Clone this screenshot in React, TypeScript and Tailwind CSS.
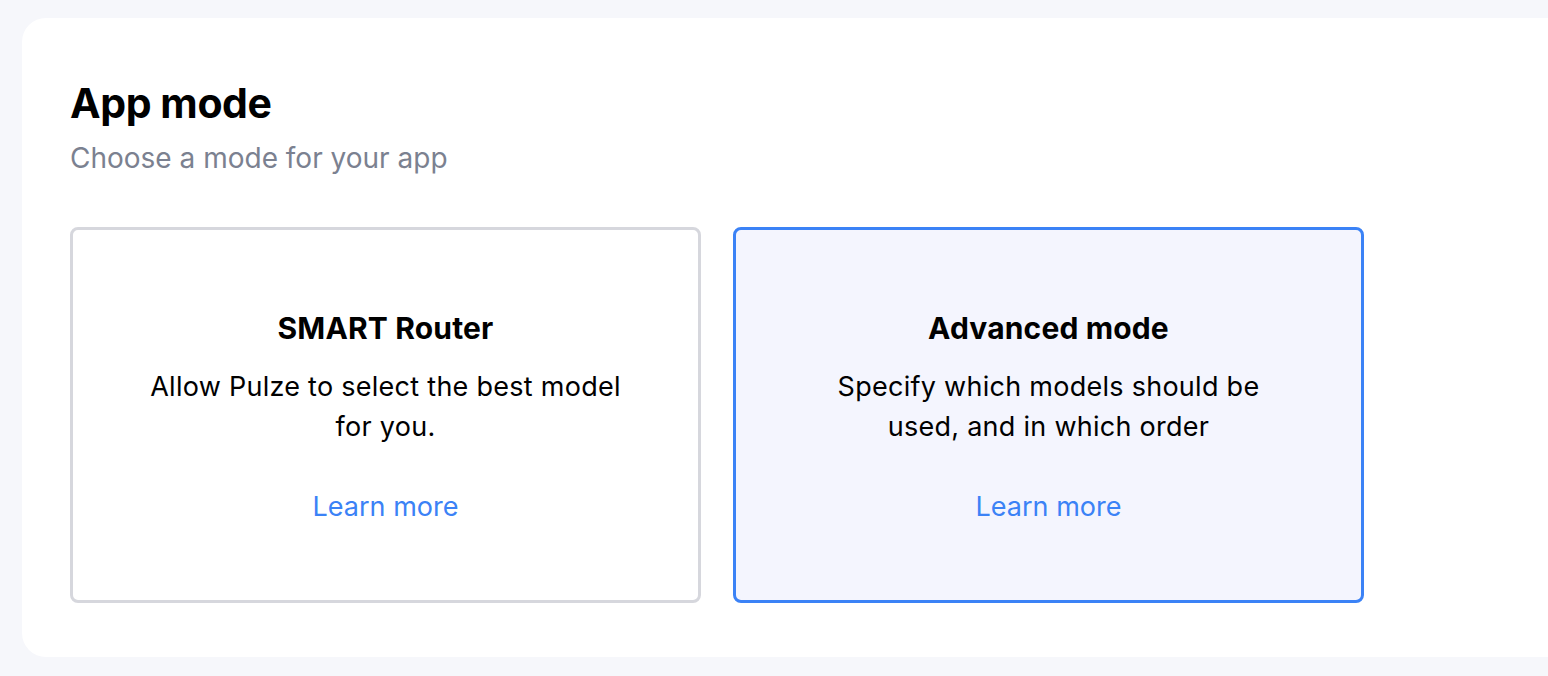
import React from 'react';

interface ModeCardProps {
  title: string;
  description: React.ReactNode;
  selected?: boolean;
}

const ModeCard: React.FC<ModeCardProps> = ({ title, description, selected }) => (
  <button
    className={`w-[631px] h-[376px] pt-[5px] rounded-lg border-[3px] flex flex-col items-center justify-center text-center ${
      selected ? 'border-[#3b82f6] bg-[#f4f5fe]' : 'border-[#d6d7dd] bg-white'
    }`}
  >
    <h3 className="text-[30px] leading-[36px] font-bold text-black tracking-[0.005em]">{title}</h3>
    <p className="mt-[21px] text-[27px] leading-[40px] text-black tracking-[0.01em]">{description}</p>
    <span className="mt-[42px] text-[27px] leading-[36px] text-[#3b82f6]">Learn more</span>
  </button>
);

export default function App() {
  return (
    <div className="w-[1548px] h-[676px] overflow-hidden bg-[#f6f7fb] pt-[18px] pl-[22px] font-['Inter',sans-serif]">
      <div className="w-[1560px] h-[639px] bg-white rounded-[24px] pt-[61px] pl-[48px]">
        <h2 className="text-[41px] leading-[48px] font-bold text-black tracking-[-0.01em]">App mode</h2>
        <p className="mt-[13px] text-[28px] leading-[36px] text-[#7b8190]">Choose a mode for your app</p>
        <div className="mt-[51px] flex gap-[32px]">
          <ModeCard
            title="SMART Router"
            description={<>Allow Pulze to select the best model<br />for you.</>}
          />
          <ModeCard
            title="Advanced mode"
            selected
            description={<>Specify which models should be<br />used, and in which order</>}
          />
        </div>
      </div>
    </div>
  );
}
